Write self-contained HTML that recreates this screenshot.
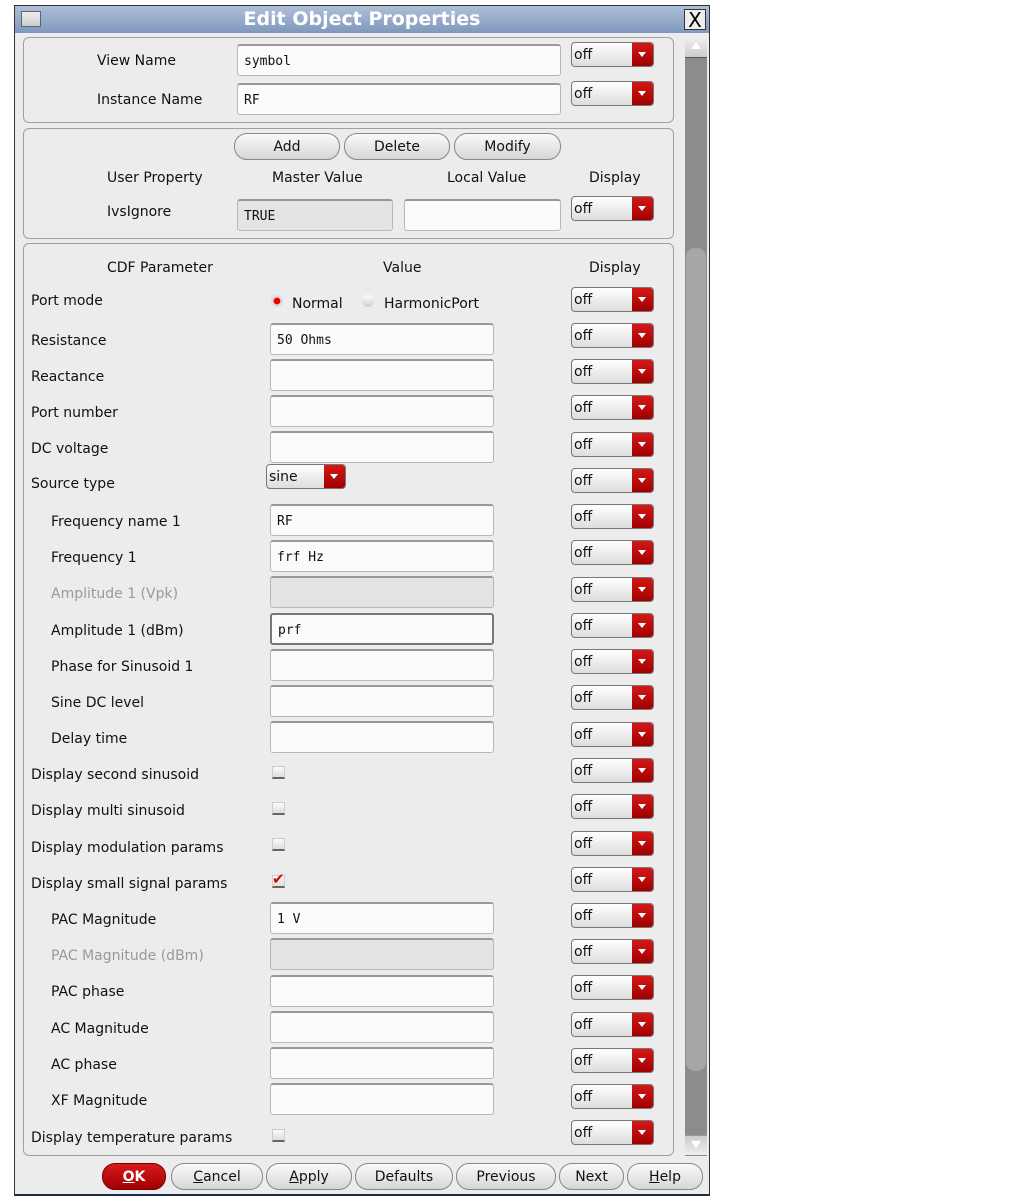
<!DOCTYPE html>
<html><head><meta charset="utf-8"><style>
*{box-sizing:border-box;margin:0;padding:0}
body{width:1013px;height:1204px;background:#fff;position:relative;font-family:"DejaVu Sans","Liberation Sans",sans-serif;font-size:14px;color:#111;overflow:hidden}
.a{position:absolute}
#win{left:14px;top:5px;width:696px;height:1191px;background:#ececec;border:1px solid #333;border-bottom:2px solid #1c2d4a}
#title{left:15px;top:6px;width:694px;height:27px;background:linear-gradient(#aebfd8,#7f98bd);color:#fff;font-weight:bold;font-size:19px;text-align:center;line-height:27px;font-family:"DejaVu Sans",sans-serif}
.grp{position:absolute;border:1px solid #a0a0a0;border-radius:6px;left:23px;width:651px}
.lbl{position:absolute;white-space:nowrap;line-height:16px;padding-top:1px}
.inp{position:absolute;background:#fbfbfb;border:1px solid #b8b8b8;border-top:2px solid #999;border-radius:3px;font-family:"DejaVu Sans Mono","Liberation Mono",monospace;font-size:13px;padding:8px 0 0 6px}
.dis{background:#e4e4e4}
.dd{position:absolute;width:83px;height:25px;border:1px solid #777;border-radius:4px;background:linear-gradient(#fff,#ddd);font-size:14px;line-height:24px;padding-left:2px;overflow:hidden}
.dd b{position:absolute;right:0;top:0;width:21px;height:100%;background:linear-gradient(#d41818,#a00000)}
.dd b:after{content:"";position:absolute;left:6px;top:9px;border:4px solid transparent;border-top:5px solid #fff}
.cb{position:absolute;left:272px;width:13px;height:13px;background:linear-gradient(#fafafa,#ddd);border:1px solid #ccc;border-bottom:2px solid #666}
.btn{position:absolute;height:27px;border:1px solid #888;border-radius:13px;background:linear-gradient(#fafafa,#d6d6d6);text-align:center;line-height:26px;font-size:14px}
.g{color:#999}
</style></head><body>
<div id="win" class="a"></div>
<div id="title" class="a">Edit Object Properties</div>
<div class="a" style="left:21px;top:11px;width:20px;height:16px;background:linear-gradient(#eee,#ccc);border:1px solid #567"></div>
<div class="a" style="left:684px;top:9px;width:22px;height:21px;background:#eee;border:1px solid #333;font-size:20px;line-height:20px;text-align:center;color:#000">X</div>

<div class="a" style="left:685px;top:38px;width:22px;height:1118px;background:#8c8c8c"></div>
<div class="a" style="left:685px;top:38px;width:22px;height:20px;background:linear-gradient(#eee,#ccc);border-bottom:1px solid #555"></div>
<div class="a" style="left:691px;top:42px;border:5px solid transparent;border-bottom:7px solid #fff;border-top:0"></div>
<div class="a" style="left:686px;top:248px;width:20px;height:823px;background:#a7a7a7;border-radius:9px"></div>
<div class="a" style="left:685px;top:1135px;width:22px;height:20px;background:linear-gradient(#ccc,#eee);border-top:1px solid #999"></div>
<div class="a" style="left:691px;top:1141px;border:5px solid transparent;border-top:7px solid #fff;border-bottom:0"></div>

<div class="grp" style="top:37px;height:86px"></div>
<div class="lbl" style="left:97px;top:52px">View Name</div>
<div class="inp" style="left:237px;top:44px;width:324px;height:32px">symbol</div>
<div class="dd" style="left:571px;top:42px">off<b></b></div>
<div class="lbl" style="left:97px;top:91px">Instance Name</div>
<div class="inp" style="left:237px;top:83px;width:324px;height:32px">RF</div>
<div class="dd" style="left:571px;top:81px">off<b></b></div>

<div class="grp" style="top:128px;height:111px"></div>
<div class="btn" style="left:234px;top:133px;width:106px">Add</div>
<div class="btn" style="left:344px;top:133px;width:106px">Delete</div>
<div class="btn" style="left:454px;top:133px;width:107px">Modify</div>
<div class="lbl" style="left:107px;top:169px">User Property</div>
<div class="lbl" style="left:272px;top:169px">Master Value</div>
<div class="lbl" style="left:447px;top:169px">Local Value</div>
<div class="lbl" style="left:589px;top:169px">Display</div>
<div class="lbl" style="left:107px;top:203px">IvsIgnore</div>
<div class="inp dis" style="left:237px;top:199px;width:156px;height:32px">TRUE</div>
<div class="inp" style="left:404px;top:199px;width:157px;height:32px"></div>
<div class="dd" style="left:571px;top:196px">off<b></b></div>

<div class="grp" style="top:243px;height:913px"></div>
<div class="lbl" style="left:107px;top:259px">CDF Parameter</div>
<div class="lbl" style="left:383px;top:259px">Value</div>
<div class="lbl" style="left:589px;top:259px">Display</div>

<div class="lbl" style="left:31px;top:292px">Port mode</div>
<div class="a" style="left:271px;top:295px;width:12px;height:12px;border-radius:6px;background:radial-gradient(#e00 35%,#ddd 45%)"></div>
<div class="lbl" style="left:292px;top:295px">Normal</div>
<div class="a" style="left:362px;top:295px;width:12px;height:12px;border-radius:6px;background:linear-gradient(#fff,#ccc)"></div>
<div class="lbl" style="left:384px;top:295px">HarmonicPort</div>
<div class="dd" style="left:571px;top:287px">off<b></b></div>

<div class="lbl" style="left:31px;top:332px">Resistance</div><div class="inp" style="left:270px;top:323px;width:224px;height:32px">50 Ohms</div><div class="dd" style="left:571px;top:323px">off<b></b></div>
<div class="lbl" style="left:31px;top:368px">Reactance</div><div class="inp" style="left:270px;top:359px;width:224px;height:32px"></div><div class="dd" style="left:571px;top:359px">off<b></b></div>
<div class="lbl" style="left:31px;top:404px">Port number</div><div class="inp" style="left:270px;top:395px;width:224px;height:32px"></div><div class="dd" style="left:571px;top:395px">off<b></b></div>
<div class="lbl" style="left:31px;top:440px">DC voltage</div><div class="inp" style="left:270px;top:431px;width:224px;height:32px"></div><div class="dd" style="left:571px;top:432px">off<b></b></div>
<div class="lbl" style="left:31px;top:475px">Source type</div><div class="dd" style="left:266px;top:464px;width:80px">sine<b></b></div><div class="dd" style="left:571px;top:468px">off<b></b></div>

<div class="lbl" style="left:51px;top:513px">Frequency name 1</div><div class="inp" style="left:270px;top:504px;width:224px;height:32px">RF</div><div class="dd" style="left:571px;top:504px">off<b></b></div>
<div class="lbl" style="left:51px;top:549px">Frequency 1</div><div class="inp" style="left:270px;top:540px;width:224px;height:32px">frf Hz</div><div class="dd" style="left:571px;top:540px">off<b></b></div>
<div class="lbl g" style="left:51px;top:585px">Amplitude 1 (Vpk)</div><div class="inp dis" style="left:270px;top:576px;width:224px;height:32px"></div><div class="dd" style="left:571px;top:577px">off<b></b></div>
<div class="lbl" style="left:51px;top:622px">Amplitude 1 (dBm)</div><div class="inp" style="left:270px;top:613px;width:224px;height:32px;border:2px solid #777">prf</div><div class="dd" style="left:571px;top:613px">off<b></b></div>
<div class="lbl" style="left:51px;top:658px">Phase for Sinusoid 1</div><div class="inp" style="left:270px;top:649px;width:224px;height:32px"></div><div class="dd" style="left:571px;top:649px">off<b></b></div>
<div class="lbl" style="left:51px;top:694px">Sine DC level</div><div class="inp" style="left:270px;top:685px;width:224px;height:32px"></div><div class="dd" style="left:571px;top:685px">off<b></b></div>
<div class="lbl" style="left:51px;top:730px">Delay time</div><div class="inp" style="left:270px;top:721px;width:224px;height:32px"></div><div class="dd" style="left:571px;top:722px">off<b></b></div>

<div class="lbl" style="left:31px;top:766px">Display second sinusoid</div><div class="cb" style="top:766px"></div><div class="dd" style="left:571px;top:758px">off<b></b></div>
<div class="lbl" style="left:31px;top:802px">Display multi sinusoid</div><div class="cb" style="top:802px"></div><div class="dd" style="left:571px;top:794px">off<b></b></div>
<div class="lbl" style="left:31px;top:839px">Display modulation params</div><div class="cb" style="top:838px"></div><div class="dd" style="left:571px;top:831px">off<b></b></div>
<div class="lbl" style="left:31px;top:875px">Display small signal params</div><div class="cb" style="top:875px"></div><div class="a" style="left:272px;top:872px;color:#d00;font-size:15px;font-weight:bold;line-height:15px">✔</div><div class="dd" style="left:571px;top:867px">off<b></b></div>

<div class="lbl" style="left:51px;top:911px">PAC Magnitude</div><div class="inp" style="left:270px;top:902px;width:224px;height:32px">1 V</div><div class="dd" style="left:571px;top:903px">off<b></b></div>
<div class="lbl g" style="left:51px;top:947px">PAC Magnitude (dBm)</div><div class="inp dis" style="left:270px;top:938px;width:224px;height:32px"></div><div class="dd" style="left:571px;top:939px">off<b></b></div>
<div class="lbl" style="left:51px;top:983px">PAC phase</div><div class="inp" style="left:270px;top:975px;width:224px;height:32px"></div><div class="dd" style="left:571px;top:975px">off<b></b></div>
<div class="lbl" style="left:51px;top:1020px">AC Magnitude</div><div class="inp" style="left:270px;top:1011px;width:224px;height:32px"></div><div class="dd" style="left:571px;top:1012px">off<b></b></div>
<div class="lbl" style="left:51px;top:1056px">AC phase</div><div class="inp" style="left:270px;top:1047px;width:224px;height:32px"></div><div class="dd" style="left:571px;top:1048px">off<b></b></div>
<div class="lbl" style="left:51px;top:1092px">XF Magnitude</div><div class="inp" style="left:270px;top:1083px;width:224px;height:32px"></div><div class="dd" style="left:571px;top:1084px">off<b></b></div>
<div class="lbl" style="left:31px;top:1129px">Display temperature params</div><div class="cb" style="top:1129px"></div><div class="dd" style="left:571px;top:1120px">off<b></b></div>

<div class="btn" style="left:102px;top:1163px;width:64px;background:linear-gradient(#d81a1a,#a00000);color:#fff;font-weight:bold;border-color:#700"><u>O</u>K</div>
<div class="btn" style="left:171px;top:1163px;width:92px"><u>C</u>ancel</div>
<div class="btn" style="left:266px;top:1163px;width:86px"><u>A</u>pply</div>
<div class="btn" style="left:355px;top:1163px;width:98px">Defaults</div>
<div class="btn" style="left:456px;top:1163px;width:100px">Previous</div>
<div class="btn" style="left:559px;top:1163px;width:65px">Next</div>
<div class="btn" style="left:627px;top:1163px;width:76px"><u>H</u>elp</div>
</body></html>
